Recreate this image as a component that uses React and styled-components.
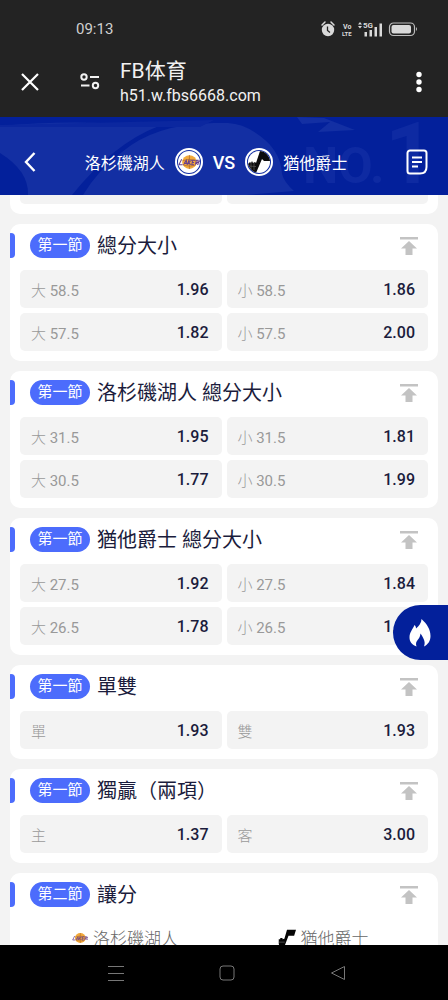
import styled, { createGlobalStyle } from "styled-components";

const MARKETS = [
    {
        period: "第一節",
        title: "總分大小",
        odds: [["大", "58.5", "1.96"], ["小", "58.5", "1.86"], ["大", "57.5", "1.82"], ["小", "57.5", "2.00"]],
    },
    {
        period: "第一節",
        title: "洛杉磯湖人 總分大小",
        odds: [["大", "31.5", "1.95"], ["小", "31.5", "1.81"], ["大", "30.5", "1.77"], ["小", "30.5", "1.99"]],
    },
    {
        period: "第一節",
        title: "猶他爵士 總分大小",
        odds: [["大", "27.5", "1.92"], ["小", "27.5", "1.84"], ["大", "26.5", "1.78"], ["小", "26.5", "1.86"]],
    },
    { period: "第一節", title: "單雙", odds: [["單", "", "1.93"], ["雙", "", "1.93"]] },
    { period: "第一節", title: "獨贏（兩項）", odds: [["主", "", "1.37"], ["客", "", "3.00"]] },
];

const LakersLogo = ({ size }) => (
    <svg width={size} height={size} viewBox="0 0 24 24" aria-hidden="true">
        <ellipse cx="12.5" cy="12" rx="8" ry="7.5" fill="#f2a93b" />
        <path d="M5 10.5q7-3 15 0M6 15.5q7 2 13 0M12.5 4.5v15" stroke="#a8652c" strokeWidth=".7" fill="none" />
        <path d="M4 9l-3 6h4M6 15l3-5 1 5M6.500 13.500h3M12 9.500l-1.500 5.500M15 10l-3.500 2.500 2.500 2.500M18.500 10h-2.500l-1 5h2.500M15.500 12.500h2M19 15l1-5h2l-.5 2.500H20l1.500 2.500M24 10l-1.500 2.500.5 2.500" stroke="#69408c" strokeWidth="1.100" fill="none" />
    </svg>
);

const JazzLogo = ({ size }) => (
    <svg width={size} height={size} viewBox="0 0 24 24" aria-hidden="true">
        <path d="M12 1h12l-2.500 8h-7.500L8.500 23.500H2.500L1 20v-6.500h2v-1.500h3v1.500l2.500-.5z" fill="#050505" />
        <path d="M1 17.500h8" stroke="#777" strokeWidth=".8" />
    </svg>
);

const JazzBadge = () => (
    <svg width="22" height="22" viewBox="0 0 22 22" aria-hidden="true">
        <path d="M12 0h5l5 7v3h-6l-2-2-6 14H6L0 15v-2l2-2 1 1 1-2 1 2 2-1 1 1z" fill="#0b0b0d" />
        <path d="M0 15l8 .5M3 12v6M6 12v7" stroke="#686868" strokeWidth=".6" />
    </svg>
);

const ToTopIcon = () => (
    <svg width="18" height="18" viewBox="0 0 18 18" aria-hidden="true">
        <path d="M0 0h18v2.500H0zM9 4l8 7.500h-4.500V18h-7v-6.500H1z" fill="#c3c3c3" />
    </svg>
);

const HeaderArt = () => (
    <HeaderBackground viewBox="0 0 448 78" preserveAspectRatio="none" aria-hidden="true">
        <path d="M0 0h448v78H0z" fill="#03209b" />
        <path d="M0 9q70-7 159 0-45 17-87 69H28Q29 54 0 36z" fill="#132fa3" />
        <path d="M214 6q-59 1-92 29-24 18-39 43h163l48-4q-10-9-12-17-1-20-17-34-18-16-37-17z" fill="#132fa3" />
        <path d="M0 8L214 3 200 10H0z" fill="#0b279f" />
        <path d="M297 0l5 7 28-2-12 10 37-2-31-12z" fill="#132fa3" />
        <text x="303" y="66" fontSize="50" fontWeight="700" fill="#0e2aa2" fontFamily="Roboto, sans-serif">NO.</text>
        <text x="385" y="66" fontSize="86" fontWeight="700" fill="#0e2aa2" fontFamily="Roboto, sans-serif">1</text>
    </HeaderBackground>
);

const Market = ({ period, title, children }) => (
    <Card>
        <CardHeader>
            <Period>{period}</Period>
            <CardTitle>{title}</CardTitle>
            <TopButton aria-label="置頂"><ToTopIcon /></TopButton>
        </CardHeader>
        {children}
    </Card>
);

const App = () => {
    return (
        <Page>
            <GlobalStyle />
            <StatusBar>
                <Clock>09:13</Clock>
                <svg width="98" height="18" viewBox="0 0 98 18" aria-hidden="true">
                    <circle cx="8" cy="10" r="6.200" fill="#d9d9d9" />
                    <path d="M2 5l3-3M14 5l-3-3" stroke="#d9d9d9" strokeWidth="1.500" strokeLinecap="round" />
                    <path d="M7.500 6.500v4l2.500 2" stroke="#232323" strokeWidth="1.300" fill="none" />
                    <g fill="#d9d9d9" fontFamily="Roboto, sans-serif" fontWeight="700">
                        <text x="23" y="9" fontSize="7">Vo</text>
                        <text x="22" y="16" fontSize="6">LTE</text>
                        <text x="43" y="8" fontSize="8">5G</text>
                    </g>
                    <path d="M38 4.500l2-2.500 2 2.500zM38 6l2 2.500 2-2.500z" fill="#d9d9d9" />
                    <path d="M44.500 12h2.500v4.500h-2.500zM49.500 10h2.500v6.500h-2.500zM54.500 7h2.500v9.500h-2.500zM59.500 3.500h2.500v13h-2.500z" fill="#d9d9d9" />
                    <rect x="69.500" y="3" width="25" height="12.500" rx="4" fill="none" stroke="#bdbdbd" strokeWidth="1.200" />
                    <rect x="71.500" y="5" width="19.500" height="8.500" rx="2" fill="#d9d9d9" />
                    <path d="M96 7q2 2 0 4z" fill="#bdbdbd" />
                </svg>
            </StatusBar>

            <BrowserBar>
                <IconButton aria-label="關閉">
                    <svg width="18" height="18" viewBox="0 0 18 18"><path d="M1 1l16 16M17 1L1 17" stroke="#fff" strokeWidth="2.200" /></svg>
                </IconButton>
                <SiteInfo>
                    <IconButton aria-label="網站設定">
                        <svg width="20" height="17" viewBox="0 0 20 17" fill="none" stroke="#f1f1f1" strokeWidth="2">
                            <circle cx="4" cy="4" r="2.700" />
                            <circle cx="15.500" cy="12.500" r="2.700" />
                            <path d="M10 4h9M1 12.500h8.500" />
                        </svg>
                    </IconButton>
                    <div>
                        <SiteTitle>FB体育</SiteTitle>
                        <SiteUrl>h51.w.fbs6668.com</SiteUrl>
                    </div>
                </SiteInfo>
                <IconButton aria-label="更多">
                    <svg width="6" height="22" viewBox="0 0 6 22" fill="#fff">
                        <circle cx="3" cy="3.500" r="2.700" />
                        <circle cx="3" cy="11" r="2.700" />
                        <circle cx="3" cy="18.500" r="2.700" />
                    </svg>
                </IconButton>
            </BrowserBar>

            <MatchHeader>
                <HeaderArt />
                <IconButton aria-label="返回">
                    <svg width="12" height="20" viewBox="0 0 12 20"><path d="M10.500 1L2 10l8.500 9" fill="none" stroke="#fff" strokeWidth="2.400" /></svg>
                </IconButton>
                <Teams>
                    <span>洛杉磯湖人</span>
                    <LogoRing><LakersLogo size="22" /></LogoRing>
                    <Versus>VS</Versus>
                    <LogoRing><JazzBadge /></LogoRing>
                    <span>猶他爵士</span>
                </Teams>
                <IconButton aria-label="注單">
                    <svg width="22" height="26" viewBox="0 0 22 26" fill="none" stroke="#fff" strokeWidth="2">
                        <path d="M4 1.500h14a2.500 2.500 0 0 1 2.500 2.500v14q0 6.500-6.500 6.500H4A2.500 2.500 0 0 1 1.500 22V4A2.500 2.500 0 0 1 4 1.500z" />
                        <path d="M6 8.500h10M6 13h10M6 17.500h6" />
                    </svg>
                </IconButton>
            </MatchHeader>

            <Content>
                <CardTail>
                    <CellTail />
                    <CellTail />
                </CardTail>
                {MARKETS.map(({ period, title, odds }) => (
                    <Market key={title} period={period} title={title}>
                        <OddsGrid>
                            {odds.map(([side, line, price]) => (
                                <OddsButton key={side + line}>
                                    <OddsLabel>{side} <Line>{line}</Line></OddsLabel>
                                    <Price>{price}</Price>
                                </OddsButton>
                            ))}
                        </OddsGrid>
                    </Market>
                ))}
                <Market period="第二節" title="讓分">
                    <TeamColumns>
                        <TeamName><LakersLogo size="16" />洛杉磯湖人</TeamName>
                        <TeamName><JazzLogo size="18" />猶他爵士</TeamName>
                    </TeamColumns>
                </Market>
                <HotButton aria-label="熱門">
                    <svg width="22" height="28" viewBox="0 0 22 28" aria-hidden="true">
                        <path d="M12.500 0C18 5 21.500 10.500 21.500 17c0 5-2.500 8.500-6.500 10.500 1.500-4 .5-7-3.500-13-.5 3-1 4-2.500 6-2 2.500-2.500 4-1.500 7C3 26 .5 22.500.5 18.500c0-5 2.500-7 5-12.500 1 1 1.500 2 1.500 3.500C10 7 12.500 4 12.500 0z" fill="#fff" />
                    </svg>
                </HotButton>
            </Content>

            <SystemNav>
                <NavButton aria-label="選單">
                    <svg width="16" height="16" viewBox="0 0 16 16"><path d="M0 1.500h16M0 8.500h16M0 15.500h16" stroke="#777" /></svg>
                </NavButton>
                <NavButton aria-label="主畫面">
                    <svg width="16" height="16" viewBox="0 0 16 16"><rect x="1" y="1" width="14" height="14" rx="3" fill="none" stroke="#777" /></svg>
                </NavButton>
                <NavButton aria-label="返回上一頁">
                    <svg width="16" height="16" viewBox="0 0 16 16"><path d="M14.500 1.500v13L1.500 8z" fill="none" stroke="#777" strokeLinejoin="round" /></svg>
                </NavButton>
            </SystemNav>
        </Page>
    )
}

export default App;

const GlobalStyle = createGlobalStyle`
    * {
        box-sizing: border-box;
    }

    body {
        margin: 0;
        background: #000;
        font-family: Roboto, "Noto Sans CJK SC", sans-serif;
    }

    button {
        padding: 0;
        border: 0;
        background: none;
        font: inherit;
        cursor: pointer;
    }

    svg {
        display: block;
        flex: none;
    }
`

const Page = styled.div`
    display: flex;
    flex-direction: column;
    height: 100vh;
`

const StatusBar = styled.div`
    display: flex;
    align-items: center;
    justify-content: space-between;
    height: 58px;
    padding: 0 30px 0 76px;
    background: #232323;
    color: #d0d0d0;
`

const Clock = styled.span`
    font-size: 15px;
`

const BrowserBar = styled.div`
    display: flex;
    align-items: center;
    height: 59px;
    padding: 0 26px 12px 21px;
    background: #232323;
    color: #f1f1f1;
`

const IconButton = styled.button`
    position: relative;
    flex: none;
`

const SiteInfo = styled.div`
    display: flex;
    flex: 1;
    align-items: center;
    gap: 20px;
    margin-left: 41px;
`

const SiteTitle = styled.div`
    font-size: 21px;
    line-height: 28px;
`

const SiteUrl = styled.div`
    font-size: 16px;
    line-height: 22px;
`

const HeaderBackground = styled.svg`
    position: absolute;
    inset: 0;
    width: 100%;
    height: 100%;
`

const MatchHeader = styled.header`
    position: relative;
    display: flex;
    align-items: center;
    height: 78px;
    padding: 12px 20px 0 24px;
    background: #03209b;
    color: #fff;
`

const Teams = styled.div`
    position: relative;
    display: flex;
    flex: 1;
    align-items: center;
    justify-content: center;
    gap: 10px;
    padding-right: 10px;
    font-size: 16px;
`

const LogoRing = styled.span`
    display: flex;
    align-items: center;
    justify-content: center;
    width: 28px;
    height: 28px;
    border: 2px solid #fff;
    border-radius: 50%;
    background: #132fa3;

    svg {
        border-radius: 50%;
        background: #fff;
    }
`

const Versus = styled.span`
    font-size: 18px;
    font-weight: 500;
`

const Content = styled.main`
    position: relative;
    flex: 1;
    min-height: 0;
    padding: 0 10px;
    overflow: hidden;
    background: #f3f3f3;
`

const Card = styled.section`
    margin-bottom: 10px;
    padding-bottom: 10px;
    overflow: hidden;
    border-radius: 10px;
    background: #fff;
`

const CardTail = styled(Card)`
    display: grid;
    grid-template-columns: 1fr 1fr;
    gap: 5px;
    padding: 0 10px 10px;
    border-radius: 0 0 10px 10px;
`

const CellTail = styled.div`
    height: 9px;
    border-radius: 0 0 5px 5px;
    background: #f3f3f3;
`

const CardHeader = styled.div`
    display: flex;
    align-items: center;
    height: 46px;
    padding: 0 20px 3px 0;

    &::before {
        content: "";
        width: 5px;
        height: 25px;
        margin-right: 15px;
        border-radius: 0 4px 4px 0;
        background: #4c6cfc;
    }
`

const Period = styled.span`
    width: 60px;
    border-radius: 13px;
    background: #4c6cfc;
    color: #fff;
    font-size: 15px;
    line-height: 25px;
    text-align: center;
`

const CardTitle = styled.h2`
    flex: 1;
    margin: 0 0 0 7px;
    color: #1b1c3c;
    font-size: 20px;
    font-weight: 400;
    line-height: 26px;
`

const TopButton = styled.button`
    flex: none;
`

const OddsGrid = styled.div`
    display: grid;
    grid-template-columns: 1fr 1fr;
    gap: 5px;
    padding: 0 10px;
`

const OddsButton = styled.button`
    display: flex;
    align-items: center;
    justify-content: space-between;
    height: 38px;
    padding: 0 13px 0 11px;
    border-radius: 5px;
    background: #f3f3f3;
`

const OddsLabel = styled.span`
    color: #999;
    font-size: 15px;
    font-weight: 300;
`

const Line = styled.span`
    font-weight: 400;
`

const Price = styled.span`
    color: #1b1c3c;
    font-size: 16px;
    font-weight: 500;
`

const TeamColumns = styled.div`
    display: grid;
    grid-template-columns: 1fr 1fr;
    padding: 6px 16px;
`

const TeamName = styled.div`
    display: flex;
    align-items: center;
    justify-content: center;
    gap: 5px;
    color: #666;
    font-size: 17px;
    font-weight: 300;
`

const HotButton = styled.button`
    position: absolute;
    top: 410px;
    right: 0;
    width: 55px;
    height: 55px;
    padding-left: 16px;
    border-radius: 28px 0 0 28px;
    background: #03209b;
`

const SystemNav = styled.nav`
    display: flex;
    justify-content: space-around;
    height: 55px;
    padding: 0 54px 0 60px;
    background: #000;
`

const NavButton = styled.button`
    width: 48px;
    display: flex;
    align-items: center;
    justify-content: center;
`
